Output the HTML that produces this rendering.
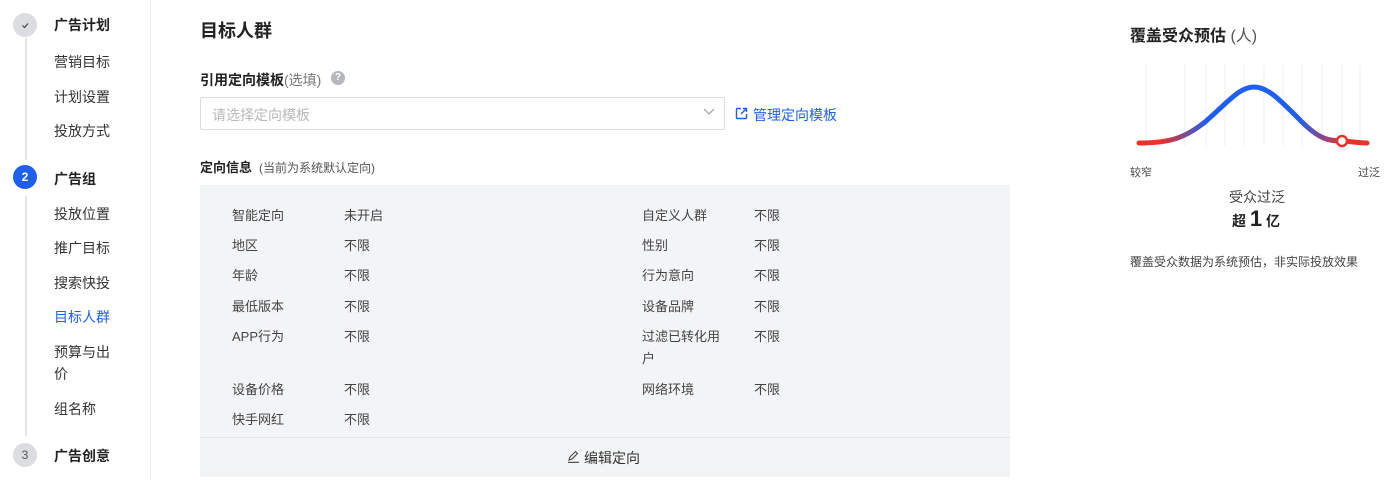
<!DOCTYPE html>
<html><head><meta charset="utf-8"><style>
*{margin:0;padding:0;box-sizing:border-box}
body{width:1400px;height:480px;overflow:hidden;background:#fff;font-family:"Liberation Sans","Noto Sans CJK SC",sans-serif;color:#333;position:relative}
.a{position:absolute;white-space:nowrap}
.nav{font-size:14px;color:#333}
.sh{font-size:14px;font-weight:bold;color:#222}
.circ{position:absolute;width:24px;height:24px;border-radius:50%;left:13px;text-align:center;line-height:24px;font-size:12px}
.t{font-size:13px;color:#444}
</style></head><body>
<div class="a" style="left:25px;top:38px;width:2px;height:122px;background:#e3e4e6"></div>
<div class="a" style="left:25px;top:196px;width:2px;height:240px;background:#e3e4e6"></div>
<div class="a" style="left:150px;top:0;width:1px;height:480px;background:#ececec"></div>
<div class="circ" style="top:13px;background:#dcdde0"><svg width="24" height="24"><path d="M9.5 12.5l2 2 3.5-4" stroke="#444" stroke-width="1.2" fill="none"/></svg></div>
<div class="circ" style="top:165px;background:#1f5ff0;color:#fff;font-weight:bold">2</div>
<div class="circ" style="top:443px;background:#dcdde0;color:#555">3</div>
<div class="a sh" style="left:54px;top:15px">广告计划</div>
<div class="a nav" style="left:54px;top:52px">营销目标</div>
<div class="a nav" style="left:54px;top:87px">计划设置</div>
<div class="a nav" style="left:54px;top:121px">投放方式</div>
<div class="a sh" style="left:54px;top:169px">广告组</div>
<div class="a nav" style="left:54px;top:204px">投放位置</div>
<div class="a nav" style="left:54px;top:238px">推广目标</div>
<div class="a nav" style="left:54px;top:273px">搜索快投</div>
<div class="a nav" style="left:54px;top:307px;color:#1f5ff0">目标人群</div>
<div class="a nav" style="left:54px;top:342px">预算与出</div>
<div class="a nav" style="left:54px;top:364px">价</div>
<div class="a nav" style="left:54px;top:399px">组名称</div>
<div class="a sh" style="left:54px;top:446px">广告创意</div>

<div class="a" style="left:200px;top:17px;font-size:18px;font-weight:bold;color:#222">目标人群</div>
<div class="a" style="left:200px;top:70px;font-size:14px;font-weight:bold;color:#222">引用定向模板<span style="font-weight:normal;color:#777">(选填)</span></div>
<div class="a" style="left:331px;top:71px;width:14px;height:14px;border-radius:50%;background:#b5b7bb;color:#fff;font-size:10px;text-align:center;line-height:14px;font-weight:bold">?</div>
<div class="a" style="left:200px;top:97px;width:525px;height:33px;border:1px solid #dcdde0;border-radius:2px"></div>
<div class="a" style="left:212px;top:105px;font-size:14px;color:#b8b9bc">请选择定向模板</div>
<svg class="a" style="left:703px;top:107px" width="12" height="10"><path d="M1 2l5 5 5-5" stroke="#aaa" fill="none" stroke-width="1.3"/></svg>
<svg class="a" style="left:735px;top:107px" width="13" height="13"><path d="M6 1.5H2A.8.8 0 0 0 1.5 2.3v8.4a.8.8 0 0 0 .8.8h8.4a.8.8 0 0 0 .8-.8V7M8 1.5h3.5V5M11.5 1.5L6 7" stroke="#1f5ff0" fill="none" stroke-width="1.4"/></svg>
<div class="a" style="left:753px;top:105px;font-size:14px;color:#1f5ff0">管理定向模板</div>
<div class="a" style="left:200px;top:157px;font-size:13px;font-weight:bold;color:#222">定向信息 <span style="font-weight:normal;font-size:12px;color:#555">&nbsp;(当前为系统默认定向)</span></div>

<div class="a" style="left:200px;top:185px;width:810px;height:292px;background:#f3f4f6"></div>
<div class="a" style="left:200px;top:437px;width:810px;height:1px;background:#e2e3e6"></div>
<div class="a t" style="left:232px;top:205px">智能定向</div><div class="a t" style="left:344px;top:205px">未开启</div>
<div class="a t" style="left:232px;top:235px">地区</div><div class="a t" style="left:344px;top:235px">不限</div>
<div class="a t" style="left:232px;top:265px">年龄</div><div class="a t" style="left:344px;top:265px">不限</div>
<div class="a t" style="left:232px;top:296px">最低版本</div><div class="a t" style="left:344px;top:296px">不限</div>
<div class="a t" style="left:232px;top:326px">APP行为</div><div class="a t" style="left:344px;top:326px">不限</div>
<div class="a t" style="left:232px;top:379px">设备价格</div><div class="a t" style="left:344px;top:379px">不限</div>
<div class="a t" style="left:232px;top:409px">快手网红</div><div class="a t" style="left:344px;top:409px">不限</div>
<div class="a t" style="left:642px;top:205px">自定义人群</div><div class="a t" style="left:754px;top:205px">不限</div>
<div class="a t" style="left:642px;top:235px">性别</div><div class="a t" style="left:754px;top:235px">不限</div>
<div class="a t" style="left:642px;top:265px">行为意向</div><div class="a t" style="left:754px;top:265px">不限</div>
<div class="a t" style="left:642px;top:296px">设备品牌</div><div class="a t" style="left:754px;top:296px">不限</div>
<div class="a t" style="left:642px;top:326px">过滤已转化用</div><div class="a t" style="left:754px;top:326px">不限</div>
<div class="a t" style="left:642px;top:348px">户</div>
<div class="a t" style="left:642px;top:379px">网络环境</div><div class="a t" style="left:754px;top:379px">不限</div>
<svg class="a" style="left:567px;top:450px" width="13" height="13"><path d="M2 10l1-3 5.5-5.5 2 2L5 9zM1 12.3h11" stroke="#444" fill="none" stroke-width="1.1"/></svg>
<div class="a" style="left:584px;top:448px;font-size:14px;color:#333">编辑定向</div>

<div class="a" style="left:1130px;top:22px;font-size:16px;font-weight:bold;color:#222">覆盖受众预估 <span style="font-weight:normal;color:#555">(人)</span></div>
<svg class="a" style="left:1130px;top:60px" width="250" height="100">
<defs><linearGradient id="g" x1="0" x2="1"><stop offset="0" stop-color="#e8322a"/><stop offset=".1" stop-color="#e8322a"/><stop offset=".3" stop-color="#1f5ff0"/><stop offset=".7" stop-color="#1f5ff0"/><stop offset=".9" stop-color="#e8322a"/><stop offset="1" stop-color="#e8322a"/></linearGradient>
<radialGradient id="sh"><stop offset="0" stop-color="#9fb6ff" stop-opacity=".7"/><stop offset="1" stop-color="#fff" stop-opacity="0"/></radialGradient></defs>
<g stroke="#eeeff1" stroke-width="1">
<line x1="16" y1="5" x2="16" y2="86"/><line x1="55" y1="5" x2="55" y2="86"/><line x1="76" y1="5" x2="76" y2="86"/><line x1="95" y1="5" x2="95" y2="86"/><line x1="114" y1="5" x2="114" y2="86"/><line x1="134" y1="5" x2="134" y2="86"/><line x1="153" y1="5" x2="153" y2="86"/><line x1="172" y1="5" x2="172" y2="86"/><line x1="192" y1="5" x2="192" y2="86"/><line x1="212" y1="5" x2="212" y2="86"/><line x1="230" y1="5" x2="230" y2="86"/></g>
<circle cx="212" cy="84" r="12" fill="url(#sh)"/>
<path d="M9 83C40 83 55 78 75 62C100 40 110 27 124 27C138 27 150 40 172 62C190 80 200 81 212 81C225 82 230 83 237 83" stroke="url(#g)" stroke-width="5" fill="none" stroke-linecap="round"/>
<circle cx="212" cy="81" r="5" fill="#fff" stroke="#e8322a" stroke-width="2.5"/>
</svg>
<div class="a" style="left:1130px;top:164px;font-size:11px;color:#444">较窄</div>
<div class="a" style="left:1358px;top:164px;font-size:11px;color:#444">过泛</div>
<div class="a" style="left:1229px;top:187px;font-size:14px;color:#444">受众过泛</div>
<div class="a" style="left:1232px;top:206px;font-size:14px;font-weight:bold;color:#222">超 <span style="font-size:22px">1</span> 亿</div>
<div class="a" style="left:1130px;top:253px;font-size:12px;color:#444">覆盖受众数据为系统预估，非实际投放效果</div>
</body></html>
